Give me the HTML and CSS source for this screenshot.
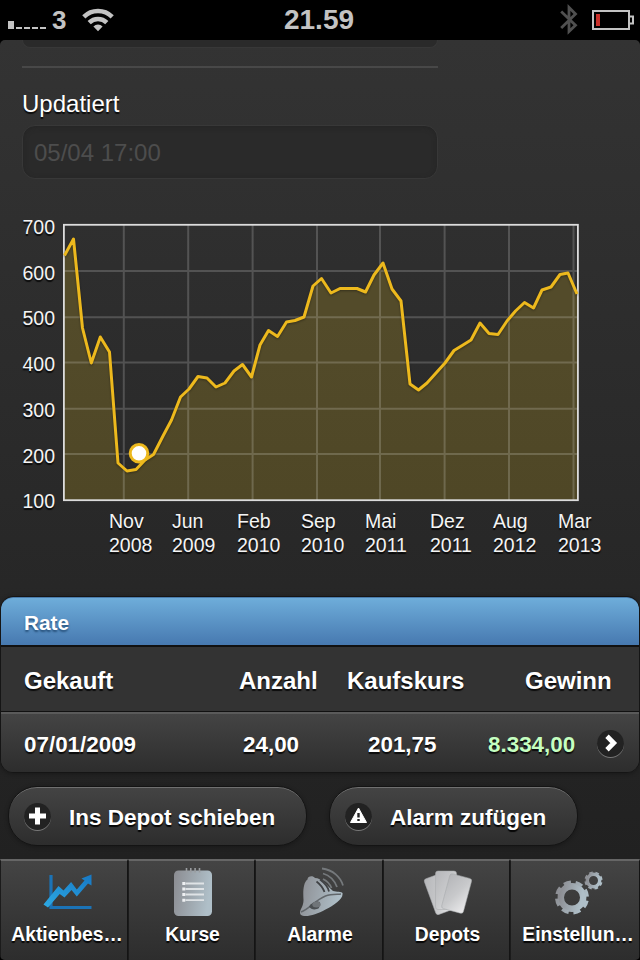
FILE: index.html
```html
<!DOCTYPE html>
<html lang="de">
<head>
    <meta charset="UTF-8">
    <meta name="viewport" content="width=device-width, initial-scale=1.0">
    <title>Aktienbestand</title>
    <link rel="stylesheet" href="styles.css">
</head>
<body>

    <!-- Statusleiste -->
    <header class="status-bar">
        <div class="status-left">
            <svg width="38" height="8" viewBox="0 0 38 8" fill="#c3c3c3">
                <path d="M0 0h6v8H0zM8 6h6v2H8zM16 6h6v2h-6zM24 6h6v2h-6zM32 6h6v2h-6z"/>
            </svg>
            <span class="carrier">3</span>
            <svg class="wifi" width="32" height="24" viewBox="0 0 32 24">
                <path d="M1.800 8.800a20.200 20.200 0 0 1 28.400 0M7.200 14.600a12.500 12.500 0 0 1 17.600 0" fill="none" stroke="#c3c3c3" stroke-width="4.500"/>
                <path d="M16 23.300l-4.600-4.800a6.400 6.400 0 0 1 9.200 0z" fill="#c3c3c3"/>
            </svg>
        </div>
        <span class="clock">21.59</span>
        <div class="status-right">
            <svg width="18" height="32" viewBox="0 0 18 32">
                <path d="M1.200 7.500L15.500 21.200 9 27.500V3.500l6.500 6.500L1.200 24" fill="none" stroke="#505050" stroke-width="2.800"/>
            </svg>
            <svg width="42" height="20" viewBox="0 0 42 20">
                <path d="M1 1h36v18H1zM37 6.500h4v7h-4" fill="none" stroke="#c3c3c3" stroke-width="2"/>
                <path d="M4 4h4v12H4z" fill="#c9302a"/>
            </svg>
        </div>
    </header>

    <main class="page">

        <!-- Formular -->
        <div class="form">
            <div class="field field-cut"></div>
            <hr>
            <label for="updated">Updatiert</label>
            <input class="field" type="text" id="updated" value="05/04 17:00" disabled>
        </div>

        <!-- Kursverlauf -->
        <section class="chart">
            <div class="chart-top">
                <div class="y-axis">
                    <span>700</span>
                    <span>600</span>
                    <span>500</span>
                    <span>400</span>
                    <span>300</span>
                    <span>200</span>
                    <span>100</span>
                </div>
                <svg class="plot" width="518" height="280" viewBox="62 222 518 280">
                    <path class="area" d="M64 500V255.5L73.5 239 82.5 328 91.3 363 100.3 337 109.5 352 118 463 127 471 136 469.5 145 460 153.5 454.5 163 436 171.5 420 180.5 397 189 389 198 376.5 207 378 216 387 225 383 234 371 242.5 364.5 251.5 377 260 345 268.5 330.5 277.5 336.5 286.5 322 295 320.5 304 317 313 286 321.5 278.5 331 293 340 288.5 357 288.5 365.5 292 374 275 383 263 392 289 401 301 410 384 418.5 390 427 383 436 373 445 363 454 350.5 463 345 471 340 480 323 489 333.5 498 334.5 507 321 515.5 311 524.5 302.5 533.5 308 542 290 551 287 560 274.5 568 273 577 294V500z"/>
                    <path class="grid" d="M64 271h514M64 317.3h514M64 362.6h514M64 408.8h514M64 454h514M123.8 225v275M188.2 225v275M252.6 225v275M317 225v275M380 225v275M444.6 225v275M509 225v275M573.5 225v275"/>
                    <rect class="frame" x="63.9" y="224.8" width="514" height="275.4"/>
                    <path class="line" d="M64.5 255.5L73.5 239 82.5 328 91.3 363 100.3 337 109.5 352 118 463 127 471 136 469.5 145 460 153.5 454.5 163 436 171.5 420 180.5 397 189 389 198 376.5 207 378 216 387 225 383 234 371 242.5 364.5 251.5 377 260 345 268.5 330.5 277.5 336.5 286.5 322 295 320.5 304 317 313 286 321.5 278.5 331 293 340 288.5 357 288.5 365.5 292 374 275 383 263 392 289 401 301 410 384 418.5 390 427 383 436 373 445 363 454 350.5 463 345 471 340 480 323 489 333.5 498 334.5 507 321 515.5 311 524.5 302.5 533.5 308 542 290 551 287 560 274.5 568 273 577 294"/>
                    <circle class="marker" cx="139" cy="453.3" r="8.8"/>
                </svg>
            </div>
            <div class="x-axis">
                <span>Nov<br>2008</span>
                <span>Jun<br>2009</span>
                <span>Feb<br>2010</span>
                <span>Sep<br>2010</span>
                <span>Mai<br>2011</span>
                <span>Dez<br>2011</span>
                <span>Aug<br>2012</span>
                <span>Mar<br>2013</span>
            </div>
        </section>

        <!-- Käufe -->
        <section class="list">
            <h2>Rate</h2>
            <div class="list-head">
                <span>Gekauft</span>
                <span>Anzahl</span>
                <span>Kaufskurs</span>
                <span>Gewinn</span>
            </div>
            <div class="list-row">
                <span>07/01/2009</span>
                <span>24,00</span>
                <span>201,75</span>
                <span class="profit">8.334,00</span>
                <span class="disc">
                    <svg width="26" height="26" viewBox="0 0 26 26">
                        <path d="M10 6.300l6.700 6.700-6.700 6.700" fill="none" stroke="#fff" stroke-width="4.800"/>
                    </svg>
                </span>
            </div>
        </section>

        <div class="buttons">
            <button class="btn btn-depot">
                <span class="disc">
                    <svg width="26" height="26" viewBox="0 0 26 26">
                        <path d="M13.500 4.500v17M5 13h17" fill="none" stroke="#fff" stroke-width="5"/>
                    </svg>
                </span>
                Ins Depot schieben
            </button>
            <button class="btn btn-alarm">
                <span class="disc">
                    <svg width="26" height="26" viewBox="0 0 26 26">
                        <path d="M13.500 5L21.500 19.500h-16z" fill="#fff" stroke="#fff" stroke-linejoin="round"/>
                        <path d="M12.300 10h2.400v4.500h-2.400zM12.300 16h2.400v2h-2.400z" fill="#222"/>
                    </svg>
                </span>
                Alarm zufügen
            </button>
        </div>
    </main>

    <!-- Tabs -->
    <nav class="tabs">
        <a class="tab tab-long">
            <svg width="50" height="50" viewBox="0 0 50 50">
                <defs>
                    <linearGradient id="blue" x1="0" y1="1" x2="1" y2="0">
                        <stop offset="0" stop-color="#2daae4"/>
                        <stop offset="1" stop-color="#1778c4"/>
                    </linearGradient>
                </defs>
                <path d="M9 8v32.500H49.500" fill="none" stroke="#1b73b6" stroke-width="3.200"/>
                <path d="M1.500 37.500l4.500 3L17.700 27l4.800 3.500 7-7.500 5.300 6.500L46 16.500l3.500 2V7.500L39.500 11.500l3 2-7.700 9L29.100 15 21.500 23.500 16.500 19z" fill="url(#blue)"/>
            </svg>
            <span>Aktienbes…</span>
        </a>
        <a class="tab">
            <svg width="50" height="50" viewBox="0 0 50 50">
                <defs>
                    <linearGradient id="steel" x1="0" y1="0" x2="1" y2=".2">
                        <stop offset="0" stop-color="#8b8c91"/>
                        <stop offset="1" stop-color="#afbfc8"/>
                    </linearGradient>
                </defs>
                <rect x="6" y="3.500" width="38" height="45.500" rx="4.500" fill="url(#steel)"/>
                <path d="M18.500 1v4.500M22.800 1v4.500M27.100 1v4.500M31.500 1v4.500" stroke="#9a9da0" stroke-width="1.600"/>
                <path d="M17.500 16.500H36M17.500 22H36M17.500 27.500H36M17.500 33.200H36" stroke="#dfe3e6" stroke-width="1.800"/>
                <path d="M14.300 15h3v3h-3zM14.300 20.500h3v3h-3zM14.300 26h3v3h-3zM14.300 31.700h3v3h-3z" fill="#eef0f2"/>
            </svg>
            <span>Kurse</span>
        </a>
        <a class="tab">
            <svg width="50" height="50" viewBox="0 0 50 50">
                <path d="M5.500 47.500C3.500 43 8.500 41 8.500 33 8 25 8 16 12.500 12.500c0-3 5-4.500 7.500-1.500 6.500 0 11.500 7 18 13 3.500 1 8.500.5 9.500 2 1 6-8.500 12-17 16.500-10 5.500-21 8.500-25 5z" fill="url(#steel)"/>
                <path d="M6 45C14.500 42 19.500 33.500 30.500 29c6-2 12-1.500 15.500-2" fill="none" stroke="#62676b" stroke-width="1.400"/>
                <path d="M14 39.500c3-4.500 8-6 11-4.500l-1 6c-4 2.500-8 1.500-10-1.500z" fill="#4a4e51"/>
                <ellipse cx="21.500" cy="37.500" rx="4.200" ry="3" fill="#707579"/>
                <path d="M25 12.500c4 3 8 7 9 12M21.500 14.500c4 3 6.500 6.500 8 10.500" fill="none" stroke="#404245" stroke-width="1.800"/>
                <path d="M28 12c4 2 7 5 8.500 9M28 6.500c7 2 11.500 7 14 13.500M27 1.500C38 3 45.500 10 48 18.500" fill="none" stroke="#75797c" stroke-width="1.800"/>
            </svg>
            <span>Alarme</span>
        </a>
        <a class="tab">
            <svg width="50" height="50" viewBox="0 0 50 50">
                <defs>
                    <linearGradient id="card" x1="0" y1="0" x2="1" y2="1">
                        <stop offset="0" stop-color="#b5b6b9"/>
                        <stop offset=".5" stop-color="#c8c9cb"/>
                        <stop offset="1" stop-color="#ececed"/>
                    </linearGradient>
                </defs>
                <g fill="url(#card)" stroke="#a6a8ab" stroke-width=".5">
                    <rect x="6.500" y="8" width="20" height="38" rx="2.500" transform="rotate(-20 16.500 27)"/>
                    <rect x="12.500" y="4" width="21" height="38.500" rx="2.500"/>
                    <rect x="22.500" y="8.500" width="22.500" height="36" rx="2.500" transform="rotate(15 33.500 26)"/>
                </g>
            </svg>
            <span>Depots</span>
        </a>
        <a class="tab tab-long">
            <svg width="50" height="50" viewBox="0 0 50 50">
                <g fill="none" stroke="url(#steel)">
                    <circle cx="19" cy="30.500" r="11.200" stroke-width="6.400"/>
                    <circle cx="19" cy="30.500" r="15.200" stroke-width="3.600" stroke-dasharray="7.200 4.737" transform="rotate(12 19 30.500)"/>
                    <circle cx="40.500" cy="13.500" r="6.200" stroke-width="3.400"/>
                    <circle cx="40.500" cy="13.500" r="8" stroke-width="2.200" stroke-dasharray="3.600 2.683" transform="rotate(12 40.500 13.500)"/>
                </g>
            </svg>
            <span>Einstellun…</span>
        </a>
    </nav>

</body>
</html>
```
FILE: styles.css
```css
* {
    box-sizing: border-box;
}

body {
    margin: 0;
    width: 640px;
    height: 960px;
    overflow: hidden;
    display: flex;
    flex-direction: column;
    background-color: #000;
    color: #fff;
    font-family: "Liberation Sans", Arial, Helvetica, sans-serif;
}

svg {
    display: block;
}

/* Statusleiste */
.status-bar {
    height: 40px;
    flex: none;
    display: grid;
    grid-template-columns: 1fr auto 1fr;
    align-items: center;
    padding: 0 6px 0 8px;
    color: #c3c3c3;
    font-weight: bold;
    font-size: 28px;
    line-height: 40px;
}

.status-left,
.status-right {
    display: flex;
    align-items: center;
}

.status-left svg:first-child {
    margin-top: 10px;
}

.clock {
    margin-right: 4px;
}

.carrier {
    margin-left: 6px;
    font-size: 26px;
}

.wifi {
    margin-left: 16px;
}

.status-right {
    justify-content: flex-end;
    gap: 14px;
}

/* Inhalt */
.page {
    height: 819px;
    flex: none;
    border-radius: 5px 5px 0 0;
    overflow: hidden;
    background: linear-gradient(#333, #212121);
    text-shadow: 0 2px 1px rgba(0, 0, 0, 0.8);
}

.form {
    width: 438px;
    padding-left: 22px;
    font-size: 24px;
}

.field {
    display: block;
    width: 416px;
    height: 54px;
    padding: 2px 11px 0;
    border: 1px solid #383838;
    border-radius: 13px;
    background-color: #2a2a2a;
    box-shadow: inset 0 1px 5px #242424;
    color: #4d4d4d;
    font-family: inherit;
    font-size: 24px;
}

.field-cut {
    height: 8px;
    border-top: none;
    border-radius: 0 0 13px 13px;
    box-shadow: none;
}

hr {
    height: 2px;
    margin: 18px 0 0;
    border: none;
    background-color: #484848;
}

label {
    display: block;
    height: 57px;
    padding-top: 21px;
    line-height: 30px;
}

/* Diagramm */
.chart {
    height: 418px;
    padding-top: 43px;
    font-size: 19.500px;
    color: #f4f4f4;
}

.chart-top {
    display: flex;
    height: 280px;
}

.y-axis {
    width: 55px;
    margin-top: -17px;
    text-align: right;
    line-height: 45.700px;
}

.y-axis span {
    display: block;
}

.plot {
    margin-left: 7px;
}

.area {
    fill: rgba(237, 194, 32, 0.2);
}

.grid {
    stroke: rgba(255, 255, 255, 0.18);
    stroke-width: 2;
}

.frame {
    fill: none;
    stroke: #dcdcdc;
    stroke-width: 1.800;
}

.line {
    fill: none;
    stroke: #edb91d;
    stroke-width: 3;
    stroke-linejoin: round;
    filter: drop-shadow(0 1px 1px rgba(0, 0, 0, 0.35));
}

.marker {
    fill: #fff;
    stroke: #edb91d;
    stroke-width: 3;
}

.x-axis {
    display: grid;
    grid-template-columns: 63px 65px 64px 64px 65px 63px 65px 64px;
    padding: 7px 0 0 109px;
    line-height: 24px;
}

/* Liste */
.list {
    height: 177px;
    margin-top: -1px;
    border: 1px solid #151515;
    border-radius: 13px;
    overflow: hidden;
    font-weight: bold;
    box-shadow: 0 1px 4px rgba(0, 0, 0, 0.3);
}

.list h2 {
    height: 50px;
    margin: 0;
    padding-left: 23px;
    border-top: 1px solid #4b7cac;
    border-bottom: 2px solid #111;
    border-radius: 12px 12px 0 0;
    background: linear-gradient(#6eadda, #4779b0);
    font-size: 20.800px;
    line-height: 50px;
    text-shadow: 0 2px 2px #28527c;
}

.list-head,
.list-row {
    display: grid;
    align-items: center;
    padding-left: 23px;
}

.list-head {
    grid-template-columns: 215px 108px 178px auto;
    height: 65px;
    background-color: #333;
    border-bottom: 1px solid #111;
    font-size: 24px;
    line-height: 66px;
    padding-top: 1px;
}

.list-row {
    grid-template-columns: 219px 125px 120px 108px auto;
    height: 60px;
    border-top: 2px solid #5a5a5a;
    background: linear-gradient(#444, #2d2d2d);
    font-size: 22.400px;
    padding-top: 3px;
}

.profit {
    color: #c5ffc0;
}

.disc {
    width: 27px;
    height: 27px;
    flex: none;
    border-radius: 50%;
    background-color: #222;
    box-shadow: 0 1px 0 #777;
}

.list-row .disc {
    margin: -3px 0 0 1px;
}

/* Knöpfe */
.buttons {
    display: flex;
    gap: 22px;
    padding: 13px 0 0 8px;
}

.btn {
    display: flex;
    align-items: center;
    height: 60px;
    padding: 3px 15px 0;
    border: 1px solid #141414;
    border-radius: 29px;
    background: linear-gradient(#444, #2d2d2d);
    box-shadow: inset 0 2px 0 -1px #707070, 0 1px 4px rgba(0, 0, 0, 0.3);
    color: #fff;
    font-family: inherit;
    font-size: 22.500px;
    font-weight: bold;
    text-shadow: 0 2px 1px rgba(0, 0, 0, 0.9);
    white-space: nowrap;
}

.btn .disc {
    margin: -3px 18px 0 0;
}

.btn-depot {
    width: 299px;
}

.btn-alarm {
    width: 249px;
}

/* Tabs */
.tabs {
    flex: 1;
    display: grid;
    grid-template-columns: 128px 127px 128px 127px 130px;
    background-color: #151515;
    border-radius: 0 0 5px 5px;
    overflow: hidden;
}

.tab {
    display: flex;
    flex-direction: column;
    align-items: center;
    padding: 6px 0 0 2px;
    border-top: 2px solid #666;
    border-left: 1px solid #1b1b1b;
    border-right: 1px solid #141414;
    background: linear-gradient(#444, #2d2d2d);
    font-size: 19.300px;
    font-weight: bold;
    text-shadow: 0 2px 1px rgba(0, 0, 0, 0.9);
}

.tab span {
    margin-top: 6px;
    line-height: 24px;
    white-space: nowrap;
}

.tab-long {
    padding-left: 6px;
}
```
